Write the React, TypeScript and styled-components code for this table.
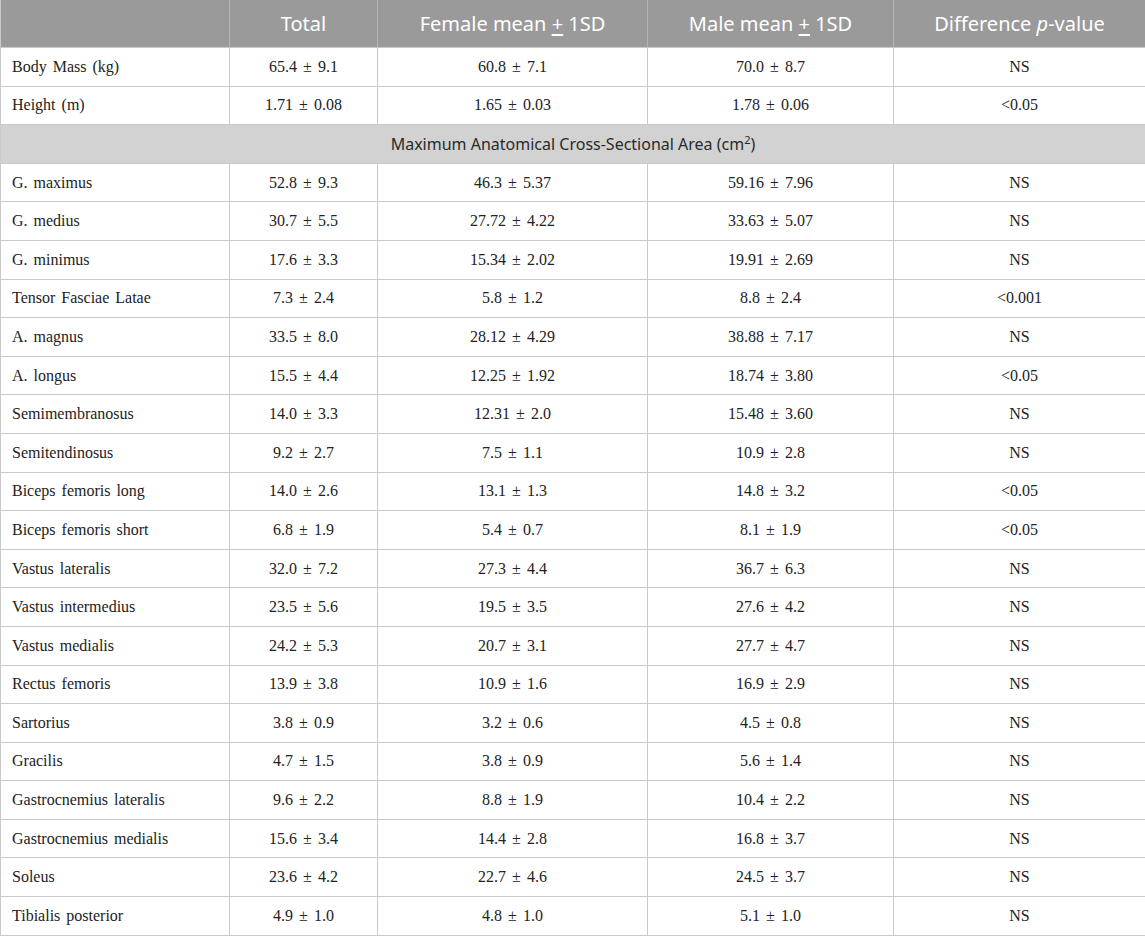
import React from "react";
import styled, { createGlobalStyle } from "styled-components";

const Global = createGlobalStyle`
  html, body { margin: 0; padding: 0; background: #ffffff; }
  body { font-family: "Liberation Serif", "Times New Roman", serif; }
`;

const Table = styled.table`
  width: 1145px;
  border-collapse: collapse;
  table-layout: fixed;
  border-left: 1px solid #c9c9c9;
  border-right: 1px solid #c9c9c9;
`;

const HeadCell = styled.th`
  height: 47px;
  padding: 0 8px;
  background: #9a9a9a;
  color: #ffffff;
  font-family: "Noto Sans", "Open Sans", sans-serif;
  font-weight: 400;
  font-size: 20px;
  text-align: center;
  border-left: 1px solid #b5b5b5;
  border-bottom: 1px solid #c9c9c9;
  &:first-child { border-left: none; }
`;

const Row = styled.tr`
  height: 38.6px;
`;

const Cell = styled.td<{ $left?: boolean }>`
  padding: 0 ${(p) => (p.$left ? "11px" : "6px")};
  font-size: 16px;
  color: #222222;
  text-align: ${(p) => (p.$left ? "left" : "center")};
  border: 1px solid #c9c9c9;
  word-spacing: 2px;
  white-space: nowrap;
`;

const SectionCell = styled.td`
  background: #d2d2d2;
  font-family: "Noto Sans", "Open Sans", sans-serif;
  font-size: 16px;
  color: #2a2a2a;
  text-align: center;
  border: 1px solid #c9c9c9;
`;

const Pm = styled.span`
  text-decoration: underline;
  text-underline-offset: 3px;
`;

type R = [string, string, string, string, string];

const top: R[] = [
  ["Body Mass (kg)", "65.4 ± 9.1", "60.8 ± 7.1", "70.0 ± 8.7", "NS"],
  ["Height (m)", "1.71 ± 0.08", "1.65 ± 0.03", "1.78 ± 0.06", "<0.05"],
];

const rows: R[] = [
  ["G. maximus", "52.8 ± 9.3", "46.3 ± 5.37", "59.16 ± 7.96", "NS"],
  ["G. medius", "30.7 ± 5.5", "27.72 ± 4.22", "33.63 ± 5.07", "NS"],
  ["G. minimus", "17.6 ± 3.3", "15.34 ± 2.02", "19.91 ± 2.69", "NS"],
  ["Tensor Fasciae Latae", "7.3 ± 2.4", "5.8 ± 1.2", "8.8 ± 2.4", "<0.001"],
  ["A. magnus", "33.5 ± 8.0", "28.12 ± 4.29", "38.88 ± 7.17", "NS"],
  ["A. longus", "15.5 ± 4.4", "12.25 ± 1.92", "18.74 ± 3.80", "<0.05"],
  ["Semimembranosus", "14.0 ± 3.3", "12.31 ± 2.0", "15.48 ± 3.60", "NS"],
  ["Semitendinosus", "9.2 ± 2.7", "7.5 ± 1.1", "10.9 ± 2.8", "NS"],
  ["Biceps femoris long", "14.0 ± 2.6", "13.1 ± 1.3", "14.8 ± 3.2", "<0.05"],
  ["Biceps femoris short", "6.8 ± 1.9", "5.4 ± 0.7", "8.1 ± 1.9", "<0.05"],
  ["Vastus lateralis", "32.0 ± 7.2", "27.3 ± 4.4", "36.7 ± 6.3", "NS"],
  ["Vastus intermedius", "23.5 ± 5.6", "19.5 ± 3.5", "27.6 ± 4.2", "NS"],
  ["Vastus medialis", "24.2 ± 5.3", "20.7 ± 3.1", "27.7 ± 4.7", "NS"],
  ["Rectus femoris", "13.9 ± 3.8", "10.9 ± 1.6", "16.9 ± 2.9", "NS"],
  ["Sartorius", "3.8 ± 0.9", "3.2 ± 0.6", "4.5 ± 0.8", "NS"],
  ["Gracilis", "4.7 ± 1.5", "3.8 ± 0.9", "5.6 ± 1.4", "NS"],
  ["Gastrocnemius lateralis", "9.6 ± 2.2", "8.8 ± 1.9", "10.4 ± 2.2", "NS"],
  ["Gastrocnemius medialis", "15.6 ± 3.4", "14.4 ± 2.8", "16.8 ± 3.7", "NS"],
  ["Soleus", "23.6 ± 4.2", "22.7 ± 4.6", "24.5 ± 3.7", "NS"],
  ["Tibialis posterior", "4.9 ± 1.0", "4.8 ± 1.0", "5.1 ± 1.0", "NS"],
];

const DataRow = ({ r }: { r: R }) => (
  <Row>
    <Cell $left>{r[0]}</Cell>
    <Cell>{r[1]}</Cell>
    <Cell>{r[2]}</Cell>
    <Cell>{r[3]}</Cell>
    <Cell>{r[4]}</Cell>
  </Row>
);

export default function App() {
  return (
    <>
      <Global />
      <Table>
        <colgroup>
          <col style={{ width: 229 }} />
          <col style={{ width: 148 }} />
          <col style={{ width: 270 }} />
          <col style={{ width: 246 }} />
          <col style={{ width: 252 }} />
        </colgroup>
        <thead>
          <tr>
            <HeadCell />
            <HeadCell>Total</HeadCell>
            <HeadCell>
              Female mean <Pm>+</Pm> 1SD
            </HeadCell>
            <HeadCell>
              Male mean <Pm>+</Pm> 1SD
            </HeadCell>
            <HeadCell>
              Difference <i>p</i>-value
            </HeadCell>
          </tr>
        </thead>
        <tbody>
          {top.map((r) => (
            <DataRow key={r[0]} r={r} />
          ))}
          <Row>
            <SectionCell colSpan={5}>
              Maximum Anatomical Cross-Sectional Area (cm<sup style={{ fontSize: "11px" }}>2</sup>)
            </SectionCell>
          </Row>
          {rows.map((r) => (
            <DataRow key={r[0]} r={r} />
          ))}
        </tbody>
      </Table>
    </>
  );
}
